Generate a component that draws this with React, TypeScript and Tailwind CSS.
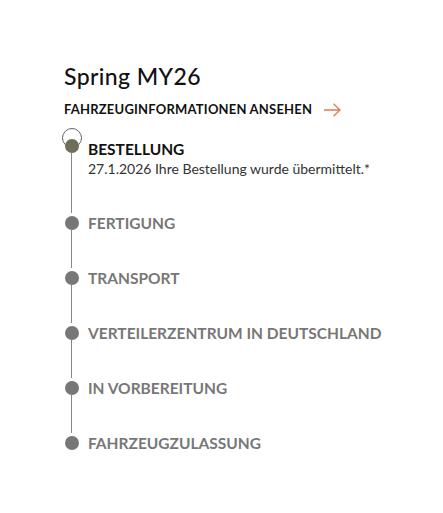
import React from 'react'

const steps = [
  { id: 1, label: 'BESTELLUNG', desc: '27.1.2026 Ihre Bestellung wurde übermittelt.*', active: true },
  { id: 2, label: 'FERTIGUNG' },
  { id: 3, label: 'TRANSPORT' },
  { id: 4, label: 'VERTEILERZENTRUM IN DEUTSCHLAND' },
  { id: 5, label: 'IN VORBEREITUNG' },
  { id: 6, label: 'FAHRZEUGZULASSUNG' },
]

export default function App() {
  return (
    <div className="w-[443px] h-[513px] bg-white pl-[64px] pt-[62px] font-['Lato',sans-serif]">
      {/* Title */}
      <h1 className="text-[23px] leading-[28px] tracking-[0.4px] text-[#111] font-medium">Spring MY26</h1>
      <a className="mt-[10px] flex items-center gap-[12px] text-[13px] font-bold text-[#111] tracking-[0.2px]">
        <span>FAHRZEUGINFORMATIONEN ANSEHEN</span>
        <svg width="17" height="14" viewBox="0 0 17 14" fill="none" stroke="#e07b4f" strokeWidth="1.3">
          <path d="M0 7h16M9.5 0.8 16 7l-6.5 6.2" />
        </svg>
      </a>

      {/* Timeline */}
      <div className="mt-[12px] flex flex-col">
        {steps.map((step, i) => {
          const last = i === steps.length - 1
          return (
            <div key={step.id} className="flex gap-[9px]">
              <div className="relative flex w-[15px] flex-col items-center">
                {step.active && (
                  <span className="absolute left-[-2.5px] top-[-4px] h-[20px] w-[20px] rounded-full border border-[#666] bg-white" />
                )}
                <span
                  className={`relative h-[14px] w-[14px] shrink-0 rounded-full ${step.active ? 'mt-[7px] bg-[#6f6e57]' : 'mt-[3px] bg-[#777]'}`}
                />
                {!last && <span className="w-px flex-1 bg-[#888]" />}
              </div>
              <div className={`${step.active ? 'pt-[7px] pb-[34px]' : 'pb-[35px]'}`}>
                <div className={`text-[15.5px] leading-[20px] font-bold ${step.active ? 'text-[#111]' : 'text-[#777]'}`}>
                  {step.label}
                </div>
                {step.desc && <div className="text-[14px] leading-[20px] text-[#333]">{step.desc}</div>}
              </div>
            </div>
          )
        })}
      </div>
    </div>
  )
}
